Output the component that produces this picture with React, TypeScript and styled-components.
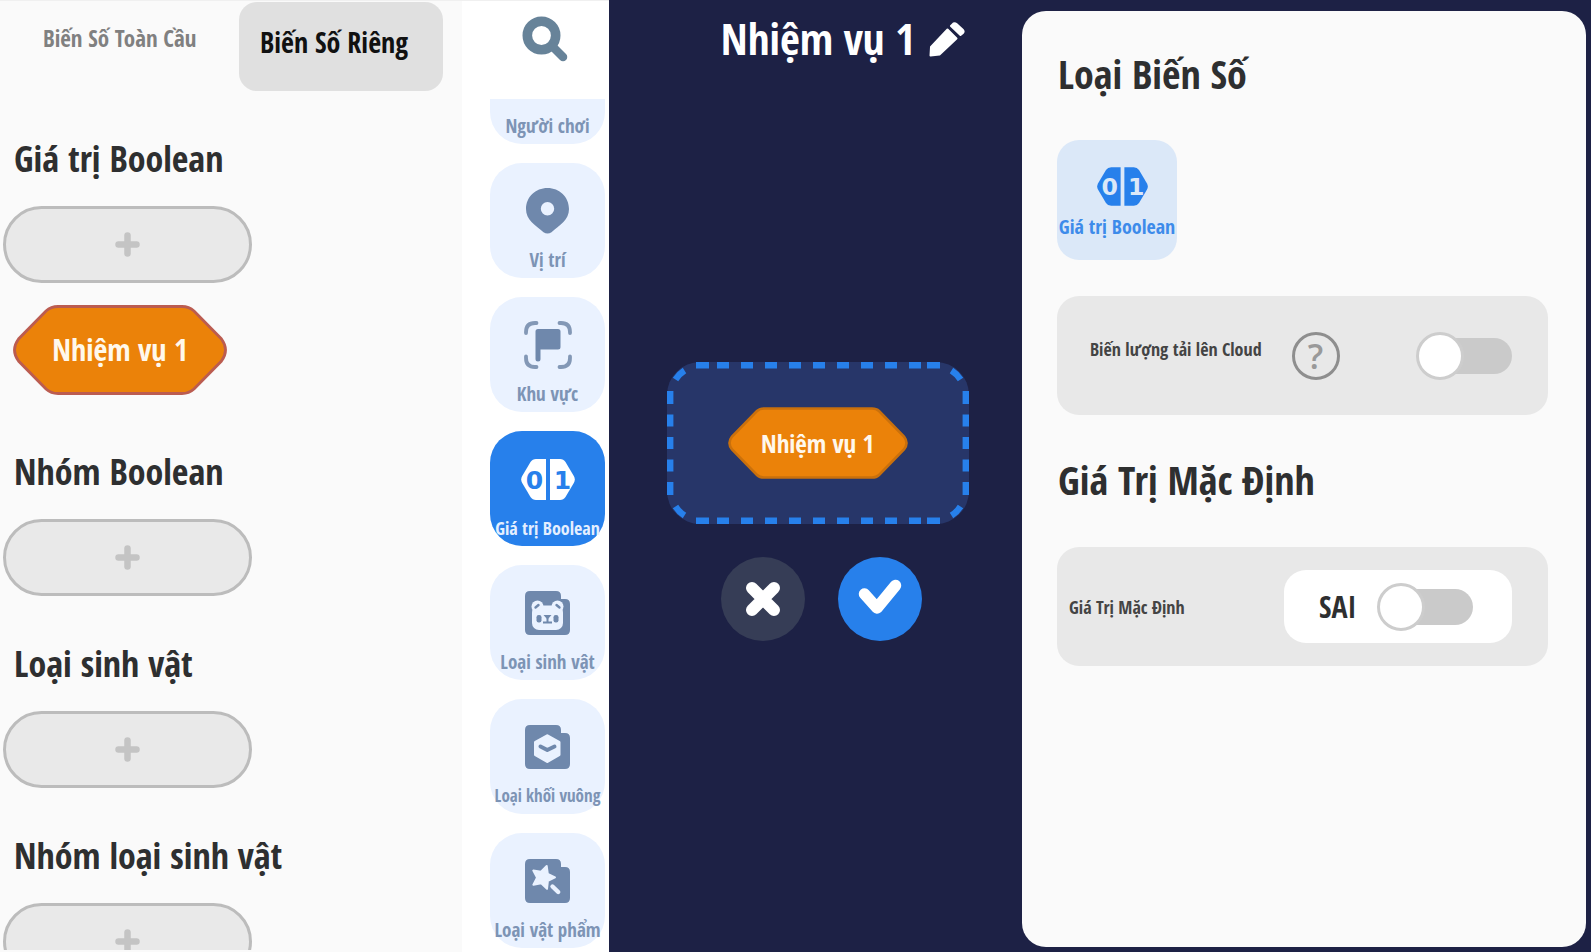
import React from "react";
import styled, { createGlobalStyle } from "styled-components";

const color = {
  navy: "#1d2145",
  panel: "#fafafa",
  card: "#e8e8e8",
  blue: "#2780eb",
  slate: "#6f88ac",
  tile: "#eaf2ff",
  ink: "#2e2f30",
  orange: "#eb8209",
};

const GlobalStyle = createGlobalStyle`
  *, *::before, *::after { box-sizing: border-box; }
  body {
    margin: 0;
    background: ${color.navy};
    font-family: "Open Sans Condensed", "Noto Sans", "Open Sans", sans-serif;
    font-weight: 700;
  }
  button {
    font: inherit;
    color: inherit;
    background: none;
    border: 0;
    padding: 0;
    cursor: pointer;
  }
  h1, h2, p, ul { margin: 0; padding: 0; font-weight: inherit; }
  ul { list-style: none; }
  svg { display: block; flex: none; }
`;

const Page = styled.div`
  display: grid;
  grid-template-columns: minmax(320px, 462fr) 147px minmax(320px, 413fr) minmax(520px, 569fr);
  height: 100vh;
`;

/* ---------- variable list ---------- */

const VariablePanel = styled.aside`
  display: flex;
  flex-direction: column;
  min-height: 0;
  padding-bottom: 2px;
  background: ${color.panel};
  border-top: 1px solid #f0f0f0;
`;

const Tabs = styled.nav`
  display: flex;
  align-items: flex-start;
  justify-content: space-between;
  padding: 1px 19px 0 0;
`;

const Tab = styled.button<{ $active?: boolean }>`
  height: 89px;
  padding: ${(p) => (p.$active ? "0 35px 10px 21px" : "0 0 18px 43px")};
  border-radius: 18px;
  background: ${(p) => (p.$active ? "#e0e0e0" : "transparent")};
  color: ${(p) => (p.$active ? "#111" : "#808080")};
  font-size: ${(p) => (p.$active ? 28 : 23)}px;
  line-height: 40px;
  white-space: nowrap;
`;

const Groups = styled.div`
  flex: 1;
  min-height: 0;
  overflow: hidden;
  padding-top: 43px;
`;

const Group = styled.section`
  display: flex;
  flex-direction: column;
  align-items: flex-start;
  gap: 22px;
  padding: 0 3px 43px;
`;

const GroupTitle = styled.h2`
  padding-left: 11px;
  color: ${color.ink};
  font-size: 36px;
  line-height: 50px;
  white-space: nowrap;
`;

const AddButton = styled.button`
  display: grid;
  place-items: center;
  width: 249px;
  height: 77px;
  border: 3px solid #bcbcbc;
  border-radius: 39px;
  background: #e9e9e9;
`;

const GroupItems = styled.div`
  padding: 0 10px 9px;
`;

const Hexagon = styled.button<{ $size: number }>`
  display: grid;
  place-items: center;
  color: #fff8ec;
  font-size: ${(p) => p.$size}px;
  line-height: 40px;
  > * { grid-area: 1 / 1; }
`;

/* ---------- category rail ---------- */

const Rail = styled.nav`
  display: flex;
  flex-direction: column;
  min-height: 0;
  background: #fff;
  border-top: 1px solid #f0f0f0;
`;

const SearchButton = styled.button`
  align-self: center;
  width: 46px;
  margin: 15px 0 37px 18px;
`;

const RailViewport = styled.div`
  flex: 1;
  min-height: 0;
  overflow: hidden;
`;

const RailList = styled.ul`
  display: flex;
  flex-direction: column;
  align-items: flex-end;
  gap: 19px;
  margin-top: -70px;
  padding-right: 4px;
`;

const RailTile = styled.button<{ $active?: boolean; $size: number }>`
  display: flex;
  flex-direction: column;
  align-items: center;
  gap: 13px;
  width: 115px;
  height: 115px;
  padding-top: 24px;
  border-radius: 32px;
  background: ${(p) => (p.$active ? color.blue : color.tile)};
  color: ${(p) => (p.$active ? "#e4efff" : "#7d94b5")};
  font-size: ${(p) => p.$size}px;
  line-height: 24px;
  white-space: nowrap;
`;

const TileIcon = styled.span`
  display: grid;
  place-items: center;
  height: 48px;
`;

/* ---------- workspace ---------- */

const Workspace = styled.main`
  display: flex;
  flex-direction: column;
  background: ${color.navy};
`;

const TitleBar = styled.header`
  display: flex;
  align-items: center;
  justify-content: center;
  gap: 14px;
  padding: 9px 0 0 55px;
`;

const Title = styled.h1`
  color: #fff;
  font-size: 43px;
  line-height: 60px;
`;

const Stage = styled.div`
  flex: 1;
  display: flex;
  flex-direction: column;
  align-items: center;
  justify-content: center;
  gap: 33px;
  padding: 0 0 19px 4px;
`;

const DropZone = styled.div`
  display: grid;
  place-items: center;
  width: 302px;
  height: 162px;
  border-radius: 33px;
  background: #273669;
  > * { grid-area: 1 / 1; }
`;

const Actions = styled.div`
  display: flex;
  gap: 33px;
  padding-left: 8px;
`;

const RoundButton = styled.button<{ $primary?: boolean }>`
  display: grid;
  place-items: center;
  width: 84px;
  height: 84px;
  border-radius: 50%;
  background: ${(p) => (p.$primary ? color.blue : "#363d56")};
`;

/* ---------- properties ---------- */

const Properties = styled.aside`
  padding: 11px 5px 5px 0;
  background: ${color.navy};
`;

const Sheet = styled.div`
  height: 100%;
  padding: 33px 38px 0 35px;
  border-radius: 24px;
  background: ${color.panel};
`;

const SheetTitle = styled.h2`
  color: ${color.ink};
  font-size: 40px;
  line-height: 60px;
  padding-left: 1px;
`;

const TypeTile = styled.button`
  display: flex;
  flex-direction: column;
  align-items: center;
  gap: 8px;
  width: 120px;
  height: 120px;
  margin: 36px 0;
  padding-top: 27px;
  border-radius: 22px;
  background: #dbe8f8;
  color: #3d8bea;
  font-size: 20px;
  line-height: 26px;
  white-space: nowrap;
`;

const TypeIcon = styled.span`
  padding-left: 10px;
`;

const SettingCard = styled.div`
  display: flex;
  align-items: center;
  height: 119px;
  margin-bottom: 35px;
  padding: 0 36px 0 12px;
  border-radius: 22px;
  background: ${color.card};
`;

const ValueLabel = styled.label`
  color: #444;
  font-size: 18px;
  line-height: 26px;
  white-space: nowrap;
`;

const CloudLabel = styled(ValueLabel)`
  padding: 0 30px 14px 21px;
`;

const HelpButton = styled.button`
  width: 48px;
  height: 48px;
  border: 3px solid #8e8e8e;
  border-radius: 50%;
  color: #999;
  font-family: "Open Sans", sans-serif;
  font-weight: 600;
  font-size: 34px;
  line-height: 42px;
`;

const Spacer = styled.span`
  flex: 1;
`;

const ValueBox = styled.div`
  display: flex;
  align-items: center;
  justify-content: space-between;
  width: 228px;
  height: 73px;
  padding: 0 39px 0 35px;
  border-radius: 22px;
  background: #fff;
  color: ${color.ink};
  font-size: 30px;
  line-height: 40px;
`;

const SettingHeading = styled(SheetTitle)`
  margin-bottom: 37px;
`;

const Switch = styled.input`
  appearance: none;
  display: grid;
  align-items: center;
  width: 96px;
  height: 48px;
  margin: 0;
  cursor: pointer;

  &::before,
  &::after {
    content: "";
    grid-area: 1 / 1;
  }
  &::before {
    height: 36px;
    margin-left: 12px;
    border-radius: 18px;
    background: #cacaca;
  }
  &::after {
    width: 48px;
    height: 48px;
    border: 3px solid #cdcdcd;
    border-radius: 50%;
    background: #fff;
  }
  &:checked::before {
    margin: 0 12px 0 0;
    background: ${color.blue};
  }
  &:checked::after {
    justify-self: end;
  }
`;

/* ---------- icons ---------- */

const SearchIcon = () => (
  <svg width="46" height="46" viewBox="0 0 46 46" fill="none" stroke="#678399" strokeLinecap="round">
    <circle cx="19.5" cy="19.5" r="14.2" strokeWidth="9.6" />
    <path d="M31 31L41 41" strokeWidth="8.5" />
  </svg>
);

const PlusIcon = () => (
  <svg width="25" height="25" viewBox="0 0 25 25" stroke="#c4c4c4" strokeWidth="6.5" strokeLinecap="round">
    <path d="M12.5 3.5V21.5M3.5 12.5H21.5" />
  </svg>
);

const PlayerIcon = () => (
  <svg width="44" height="44" viewBox="0 0 44 44" fill={color.slate}>
    <circle cx="22" cy="12" r="11" />
    <path d="M3 44C3 32 11 26 22 26S41 32 41 44Z" />
  </svg>
);

const PinIcon = () => (
  <svg width="43" height="46" viewBox="0 0 43 46" fill={color.slate}>
    <path
      fillRule="evenodd"
      d="M21.5 0C33.5 0 43 9 43 21C43 32 34 37 25.5 44.2Q21.5 47 17.5 44.2C9 37 0 32 0 21C0 9 9.5 0 21.5 0ZM21.5 14A6.7 6.7 0 1 0 21.5 27.4A6.7 6.7 0 1 0 21.5 14Z"
    />
  </svg>
);

const AreaIcon = () => (
  <svg width="48" height="48" viewBox="0 0 48 48" fill="none" stroke="#8398b6" strokeWidth="3.8" strokeLinecap="round">
    <path d="M2 12V11Q2 2 11 2H12.5M35.5 2H37Q46 2 46 11V12M46 35.500V37Q46 46 37 46H35.5M12.5 46H11Q2 46 2 37V35.5" />
    <path
      fill={color.slate}
      stroke="none"
      d="M14 8H34Q36.500 8 36.5 10.5V26Q36.500 28.5 34 28.5H16.5V38Q16.5 40.5 14 40.5T11.5 38V10.5Q11.5 8 14 8Z"
    />
  </svg>
);

type BooleanIconProps = { fill: string; digit: string; width: number; height: number };

const BooleanIcon = ({ fill, digit, width, height }: BooleanIconProps) => (
  <svg width={width} height={height} viewBox="0 0 54 41" fill={fill} aria-hidden="true">
    <path d="M25 0H15Q11.5 0 9.5 3L1.2 17Q-.8 20.5 1.2 24L9.5 38Q11.5 41 15 41H25Z" />
    <path d="M29 0H39Q42.5 0 44.5 3L52.8 17Q54.8 20.5 52.8 24L44.5 38Q42.5 41 39 41H29Z" />
    <g fill={digit} fontFamily="DejaVu Sans" fontWeight="700" fontSize="25" textAnchor="middle">
      <text x="13.5" y="30">0</text>
      <text x="41.5" y="30">1</text>
    </g>
  </svg>
);

const StackIcon = ({ children }: { children: React.ReactNode }) => (
  <svg width="45" height="44" viewBox="0 0 45 44" fill={color.slate}>
    <path d="M5 0H31Q36 0 36 5V8H40Q45 8 45 13V39Q45 44 40 44H5Q0 44 0 39V5Q0 0 5 0Z" />
    {children}
  </svg>
);

const CreatureIcon = () => (
  <StackIcon>
    <g fill={color.tile}>
      <circle cx="12.5" cy="15.5" r="6" />
      <circle cx="32.5" cy="15.5" r="6" />
      <rect x="7" y="14.5" width="31" height="24.500" rx="7" />
    </g>
    <path d="M10.5 16.5L13.5 14M34.500 16.5L31.5 14" stroke={color.slate} strokeWidth="2.4" strokeLinecap="round" />
    <rect x="11.5" y="24" width="5" height="7.5" rx="2.2" />
    <rect x="28.5" y="24" width="5" height="7.5" rx="2.2" />
    <path d="M18.5 24H26.5L22.5 28.5Z" />
    <path d="M18 31.5H27M22.5 27V31" stroke={color.slate} strokeWidth="2" />
  </StackIcon>
);

const BlockIcon = () => (
  <StackIcon>
    <path d="M22.3 10.8L34 17.2V29.800L22.3 36.5L10.5 29.8V17.2Z" fill={color.tile} stroke={color.tile} strokeWidth="3" strokeLinejoin="round" />
    <path d="M15.5 21.5L22.3 25L29.5 21.5" fill="none" stroke={color.slate} strokeWidth="4" strokeLinecap="round" strokeLinejoin="round" />
  </StackIcon>
);

const ItemIcon = () => (
  <StackIcon>
    <path
      d="M21.7 7L22.8 14.9L30 18.3L22.9 21.9L22 29.800L16.2 24.2L8.4 25.7L12 18.6L8.3 11.6L16 12.8Z"
      fill={color.tile}
      stroke={color.tile}
      strokeWidth="2"
      strokeLinejoin="round"
    />
    <path d="M27.5 27.5L33.2 33" stroke={color.tile} strokeWidth="4.4" strokeLinecap="round" />
  </StackIcon>
);

const PencilIcon = () => (
  <svg width="36" height="35" viewBox="0 0 36 35" fill="#fff" stroke="#fff" strokeWidth="2" strokeLinejoin="round">
    <path d="M1.5 33.5L2 25L18.5 7.5L27.5 16.5L10.5 32.5Z" />
    <path d="M22 4L24.5 1.5Q26 .8 27.5 2L34 8Q35.2 9.5 34 11L31.5 13Z" />
  </svg>
);

const CrossIcon = () => (
  <svg width="36" height="36" viewBox="0 0 36 36" stroke="#fff" strokeWidth="12" strokeLinecap="round">
    <path d="M7 7L29 29M29 7L7 29" />
  </svg>
);

const CheckIcon = () => (
  <svg width="84" height="84" viewBox="0 0 84 84" fill="none" stroke="#fff" strokeWidth="11.5" strokeLinecap="round" strokeLinejoin="round">
    <path d="M26.5 37L39 51L57.5 28.5" />
  </svg>
);

const LargeHexagonShape = () => (
  <svg width="214" height="90" viewBox="0 0 214 90" fill={color.orange} stroke="#bb5c50" strokeWidth="2.8">
    <path d="M45 1.5H169Q176 1.5 181 6L208.5 34Q216.5 45 208.5 56L181 84Q176 88.5 169 88.5H45Q38 88.5 33 84L5.5 56Q-2.5 45 5.5 34L33 6Q38 1.5 45 1.5Z" />
  </svg>
);

const SmallHexagonShape = () => (
  <svg width="180" height="72" viewBox="0 0 180 72" fill={color.orange} stroke="#c9700c" strokeWidth="2.6">
    <path d="M36 1.5H144Q148.5 1.5 151 4L176 29.5Q181 36 176 42.5L151 68Q148.5 70.5 144 70.5H36Q31.5 70.5 29 68L4 42.5Q-1 36 4 29.5L29 4Q31.5 1.5 36 1.5Z" />
  </svg>
);

const DashedOutline = () => (
  <svg width="302" height="162" viewBox="0 0 302 162" fill="none" stroke={color.blue} strokeWidth="6.4">
    <path d="M29 3.2H42M260 3.2H273M29 158.8H42M260 158.8H273" />
    <path d="M50 3.2H254M50 158.8H254" strokeDasharray="12 12" />
    <path d="M3.2 29V42M3.2 120V133M298.8 29V42M298.8 120V133" />
    <path d="M3.2 52.5V110M298.8 52.5V110" strokeDasharray="12 10.5" />
    <path d="M8.5 17.5Q12 12 17.5 8.5M293.5 17.5Q290 12 284.5 8.5M8.5 144.5Q12 150 17.5 153.5M293.5 144.5Q290 150 284.5 153.5" />
  </svg>
);

/* ---------- data ---------- */

const groups: { title: string; items: string[] }[] = [
  { title: "Giá trị Boolean", items: ["Nhiệm vụ 1"] },
  { title: "Nhóm Boolean", items: [] },
  { title: "Loại sinh vật", items: [] },
  { title: "Nhóm loại sinh vật", items: [] },
];

const categories: { label: string; icon: React.ReactNode; size: number; active?: boolean }[] = [
  { label: "Người chơi", icon: <PlayerIcon />, size: 19 },
  { label: "Vị trí", icon: <PinIcon />, size: 19 },
  { label: "Khu vực", icon: <AreaIcon />, size: 19 },
  {
    label: "Giá trị Boolean",
    icon: <BooleanIcon fill="#fff" digit={color.blue} width={54} height={41} />,
    size: 18,
    active: true,
  },
  { label: "Loại sinh vật", icon: <CreatureIcon />, size: 19 },
  { label: "Loại khối vuông", icon: <BlockIcon />, size: 17 },
  { label: "Loại vật phẩm", icon: <ItemIcon />, size: 19 },
];

export default function App() {
  return (
    <>
      <GlobalStyle />
      <Page>
        <VariablePanel>
          <Tabs>
            <Tab type="button">Biến Số Toàn Cầu</Tab>
            <Tab type="button" $active>Biến Số Riêng</Tab>
          </Tabs>
          <Groups>
            {groups.map((group) => (
              <Group key={group.title}>
                <GroupTitle>{group.title}</GroupTitle>
                <AddButton type="button" aria-label={`Thêm ${group.title}`}>
                  <PlusIcon />
                </AddButton>
                {group.items.length > 0 && (
                  <GroupItems>
                    {group.items.map((item) => (
                      <Hexagon key={item} type="button" $size={30}>
                        <LargeHexagonShape />
                        <span>{item}</span>
                      </Hexagon>
                    ))}
                  </GroupItems>
                )}
              </Group>
            ))}
          </Groups>
        </VariablePanel>

        <Rail>
          <SearchButton type="button" aria-label="Tìm kiếm">
            <SearchIcon />
          </SearchButton>
          <RailViewport>
            <RailList>
              {categories.map((category) => (
                <li key={category.label}>
                  <RailTile type="button" $active={category.active} $size={category.size}>
                    <TileIcon>{category.icon}</TileIcon>
                    <span>{category.label}</span>
                  </RailTile>
                </li>
              ))}
            </RailList>
          </RailViewport>
        </Rail>

        <Workspace>
          <TitleBar>
            <Title>Nhiệm vụ 1</Title>
            <button type="button" aria-label="Đổi tên">
              <PencilIcon />
            </button>
          </TitleBar>
          <Stage>
            <DropZone>
              <DashedOutline />
              <Hexagon type="button" $size={25}>
                <SmallHexagonShape />
                <span>Nhiệm vụ 1</span>
              </Hexagon>
            </DropZone>
            <Actions>
              <RoundButton type="button" aria-label="Hủy">
                <CrossIcon />
              </RoundButton>
              <RoundButton type="button" aria-label="Xác nhận" $primary>
                <CheckIcon />
              </RoundButton>
            </Actions>
          </Stage>
        </Workspace>

        <Properties>
          <Sheet>
            <SheetTitle>Loại Biến Số</SheetTitle>
            <TypeTile type="button">
              <TypeIcon>
                <BooleanIcon fill={color.blue} digit="#dbe8f8" width={51} height={39} />
              </TypeIcon>
              <span>Giá trị Boolean</span>
            </TypeTile>
            <SettingCard>
              <CloudLabel htmlFor="cloud">Biến lượng tải lên Cloud</CloudLabel>
              <HelpButton type="button">?</HelpButton>
              <Spacer />
              <Switch id="cloud" type="checkbox" />
            </SettingCard>
            <SettingHeading>Giá Trị Mặc Định</SettingHeading>
            <SettingCard>
              <ValueLabel htmlFor="default-value">Giá Trị Mặc Định</ValueLabel>
              <Spacer />
              <ValueBox>
                <span>SAI</span>
                <Switch id="default-value" type="checkbox" />
              </ValueBox>
            </SettingCard>
          </Sheet>
        </Properties>
      </Page>
    </>
  );
}
